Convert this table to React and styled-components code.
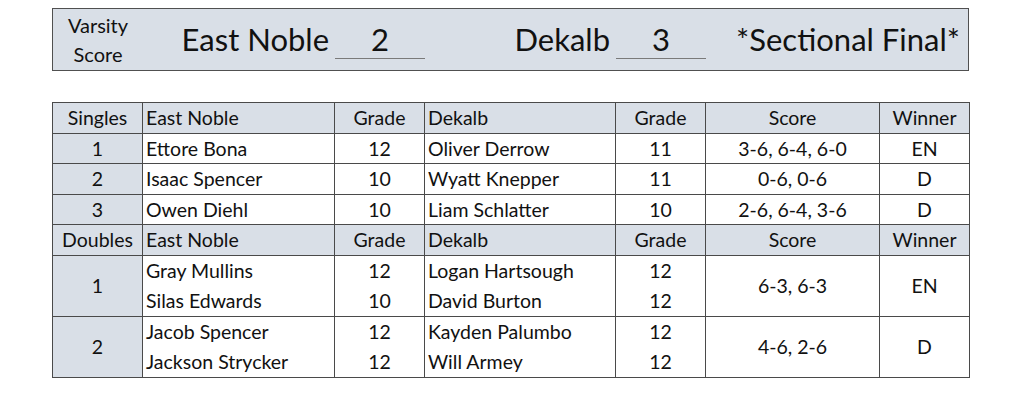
import React from 'react';
import styled, { createGlobalStyle } from 'styled-components';

const GlobalStyle = createGlobalStyle`
  body {
    margin: 0;
    background: #ffffff;
    font-family: Lato, "Open Sans", sans-serif;
    color: #111111;
  }
`;

const COLS = '90px 192px 90px 191px 90px 174px 90px';
const SHADE = '#d9dfe7';
const LINE = '#4a4a4a';

const Page = styled.div`
  width: 1024px;
  height: 408px;
  padding: 8px 0 0 52px;
  box-sizing: border-box;
  display: flex;
  flex-direction: column;
  gap: 31px;
`;

const ScoreBanner = styled.div`
  width: 917px;
  height: 63px;
  box-sizing: border-box;
  display: grid;
  grid-template-columns: ${COLS};
  align-items: center;
  background-color: ${SHADE};
  border: 1.5px solid #505050;
`;

const Varsity = styled.div`
  font-size: 20px;
  line-height: 29px;
  text-align: center;
`;

const TeamName = styled.div`
  font-size: 31px;
  text-align: right;
  padding-right: 6px;
  padding-bottom: 2px;
  white-space: nowrap;
`;

const ScoreSlot = styled.div`
  font-size: 31px;
  text-align: center;
  height: 36px;
  line-height: 34px;
  border-bottom: 1px solid #7a7a7a;
  margin-top: 2px;
`;

const Note = styled.div`
  grid-column: span 2;
  font-size: 31px;
  text-align: center;
  padding-left: 20px;
  padding-bottom: 2px;
  white-space: nowrap;
`;

const Table = styled.table`
  width: 917px;
  border-collapse: collapse;
  table-layout: fixed;
  font-size: 19.5px;
`;

const Row = styled.tr`
  height: 30.5px;
`;

const Cell = styled.td`
  border: 1px solid ${LINE};
  padding: 0 3px;
  text-align: ${(p) => (p.$left ? 'left' : 'center')};
  vertical-align: middle;
  background-color: ${(p) => (p.$shade ? SHADE : '#ffffff')};
  white-space: nowrap;
  line-height: 1;
`;

const PairCell = styled(Cell)`
  border-bottom: ${(p) => (p.$top ? 'none' : `1px solid ${LINE}`)};
  border-top: ${(p) => (p.$top ? `1px solid ${LINE}` : 'none')};
`;

const widths = [90, 192, 90, 191, 90, 174, 90];

const singles = [
  ['1', 'Ettore Bona', '12', 'Oliver Derrow', '11', '3-6, 6-4, 6-0', 'EN'],
  ['2', 'Isaac Spencer', '10', 'Wyatt Knepper', '11', '0-6, 0-6', 'D'],
  ['3', 'Owen Diehl', '10', 'Liam Schlatter', '10', '2-6, 6-4, 3-6', 'D'],
];

const doubles = [
  {
    no: '1',
    players: [
      ['Gray Mullins', '12', 'Logan Hartsough', '12'],
      ['Silas Edwards', '10', 'David Burton', '12'],
    ],
    score: '6-3, 6-3',
    winner: 'EN',
  },
  {
    no: '2',
    players: [
      ['Jacob Spencer', '12', 'Kayden Palumbo', '12'],
      ['Jackson Strycker', '12', 'Will Armey', '12'],
    ],
    score: '4-6, 2-6',
    winner: 'D',
  },
];

const HeadRow = ({ label }) => (
  <Row>
    <Cell $shade>{label}</Cell>
    <Cell $shade $left>East Noble</Cell>
    <Cell $shade>Grade</Cell>
    <Cell $shade $left>Dekalb</Cell>
    <Cell $shade>Grade</Cell>
    <Cell $shade>Score</Cell>
    <Cell $shade>Winner</Cell>
  </Row>
);

const App = () => {
  return (
    <>
      <GlobalStyle />
      <Page>
        <ScoreBanner>
          <Varsity>
            Varsity
            <br />
            Score
          </Varsity>
          <TeamName>East Noble</TeamName>
          <ScoreSlot>2</ScoreSlot>
          <TeamName>Dekalb</TeamName>
          <ScoreSlot>3</ScoreSlot>
          <Note>*Sectional Final*</Note>
        </ScoreBanner>

        <Table>
          <colgroup>
            {widths.map((w, i) => (
              <col key={i} style={{ width: w }} />
            ))}
          </colgroup>
          <tbody>
            <HeadRow label="Singles" />
            {singles.map((r) => (
              <Row key={r[0]}>
                <Cell $shade>{r[0]}</Cell>
                <Cell $left>{r[1]}</Cell>
                <Cell>{r[2]}</Cell>
                <Cell $left>{r[3]}</Cell>
                <Cell>{r[4]}</Cell>
                <Cell>{r[5]}</Cell>
                <Cell>{r[6]}</Cell>
              </Row>
            ))}
            <HeadRow label="Doubles" />
            {doubles.map((d) =>
              d.players.map((p, i) => (
                <Row key={d.no + i}>
                  {i === 0 && (
                    <Cell $shade rowSpan={2}>
                      {d.no}
                    </Cell>
                  )}
                  <PairCell $left $top={i === 0}>{p[0]}</PairCell>
                  <PairCell $top={i === 0}>{p[1]}</PairCell>
                  <PairCell $left $top={i === 0}>{p[2]}</PairCell>
                  <PairCell $top={i === 0}>{p[3]}</PairCell>
                  {i === 0 && <Cell rowSpan={2}>{d.score}</Cell>}
                  {i === 0 && <Cell rowSpan={2}>{d.winner}</Cell>}
                </Row>
              ))
            )}
          </tbody>
        </Table>
      </Page>
    </>
  );
};

export default App;
